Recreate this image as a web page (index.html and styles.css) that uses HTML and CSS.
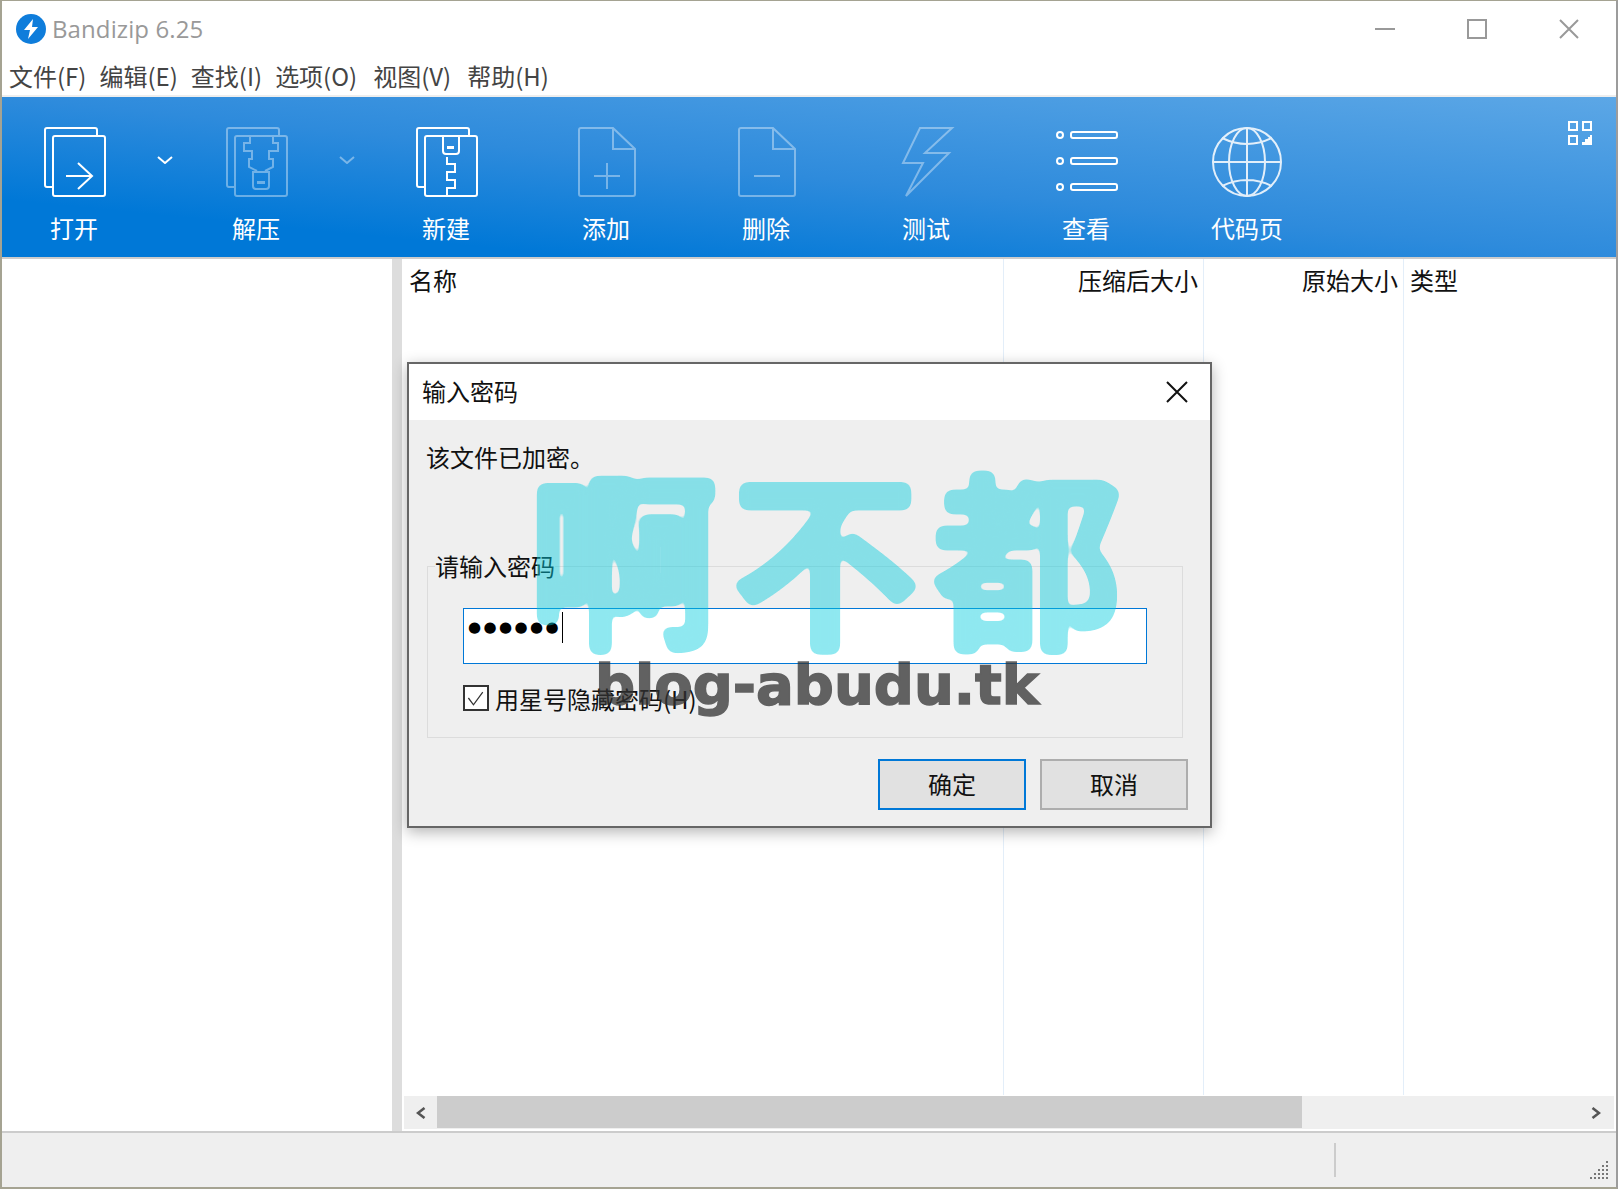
FILE: index.html
```html
<!DOCTYPE html>
<html lang="zh">
<head>
<meta charset="utf-8">
<title>Bandizip 6.25</title>
<link rel="stylesheet" href="styles.css">
</head>
<body>
<svg class="defs" aria-hidden="true">
  <filter id="wm-round" x="-5%" y="-5%" width="110%" height="110%" color-interpolation-filters="sRGB">
    <feGaussianBlur stdDeviation="4"/>
    <feComponentTransfer><feFuncA type="linear" slope="14" intercept="-3.5"/></feComponentTransfer>
  </filter>
</svg>
<div class="window">
  <header class="titlebar">
    <svg class="logo" viewBox="16 14 30 30"><circle cx="31" cy="29" r="15" fill="#0f7ddb"/><path d="M33 19 L24 30 H30 L28 39 L38 27 H32 Z" fill="#fff"/></svg>
    <span class="apptitle">Bandizip 6.25</span>
    <div class="winctl">
      <svg viewBox="0 0 20 20"><path d="M0 10 H20"/></svg>
      <svg viewBox="0 0 20 20"><rect x="1" y="1" width="18" height="18"/></svg>
      <svg viewBox="0 0 20 20"><path d="M1 1 L19 19 M19 1 L1 19"/></svg>
    </div>
  </header>
  <nav class="menubar">
    <span>文件(F)</span><span>编辑(E)</span><span>查找(I)</span><span>选项(O)</span><span class="m-wide">视图(V)</span><span class="m-wide">帮助(H)</span>
  </nav>
  <div class="toolbar">
    <div class="tool tool-short">
      <svg class="ticon" viewBox="38 126 72 72"><path d="M52 187 H47 a2 2 0 0 1 -2 -2 V130 a2 2 0 0 1 2 -2 H95 a2 2 0 0 1 2 2 V136"/><rect x="53" y="136" width="52" height="60" rx="2"/><path d="M66 176 H92 M78 163 L92 176 L78 189"/></svg>
      <span>打开</span>
    </div>
    <div class="chev"><svg viewBox="0 0 16 8"><path d="M1 1 L8 7 L15 1"/></svg></div>
    <div class="tool tool-short dim">
      <svg class="ticon" viewBox="220 126 72 72"><path d="M234 187 H229 a2 2 0 0 1 -2 -2 V130 a2 2 0 0 1 2 -2 H277 a2 2 0 0 1 2 2 V136"/><rect x="235" y="136" width="52" height="60" rx="2"/><path d="M243 136 H250 V143 H244 V151 H252 V159 H249 V167 L257 171 M280 136 H273 V143 H278 V151 H269 V159 H273 V167 L265 171 M253 172 H269 V186 a3 3 0 0 1 -3 3 H256 a3 3 0 0 1 -3 -3 Z"/><rect class="solid" x="257" y="181" width="8" height="3"/></svg>
      <span>解压</span>
    </div>
    <div class="chev dim"><svg viewBox="0 0 16 8"><path d="M1 1 L8 7 L15 1"/></svg></div>
    <div class="tool">
      <svg class="ticon" viewBox="410 126 72 72"><path d="M424 187 H419 a2 2 0 0 1 -2 -2 V130 a2 2 0 0 1 2 -2 H467 a2 2 0 0 1 2 2 V136"/><rect x="425" y="136" width="52" height="60" rx="2"/><path d="M443 136 V151 a3 3 0 0 0 3 3 H456 a3 3 0 0 0 3 -3 V136 M447 157 V164 H455 V172 H447 V180 H455 V188 H447 V196"/><rect class="solid" x="447" y="146" width="7" height="3"/></svg>
      <span>新建</span>
    </div>
    <div class="tool dim">
      <svg class="ticon" viewBox="570 126 72 72"><path d="M613 128 H581 a2 2 0 0 0 -2 2 V194 a2 2 0 0 0 2 2 H633 a2 2 0 0 0 2 -2 V149 Z M613 128 V149 H635 M594 176 H620 M607 163 V189"/></svg>
      <span>添加</span>
    </div>
    <div class="tool dim">
      <svg class="ticon" viewBox="730 126 72 72"><path d="M773 128 H741 a2 2 0 0 0 -2 2 V194 a2 2 0 0 0 2 2 H793 a2 2 0 0 0 2 -2 V149 Z M773 128 V149 H795 M754 176 H780"/></svg>
      <span>删除</span>
    </div>
    <div class="tool dim">
      <svg class="ticon" viewBox="890 126 72 72"><path d="M920 128 H952 L925 153 H949 L906 196 L923 163 H903 Z"/></svg>
      <span>测试</span>
    </div>
    <div class="tool">
      <svg class="ticon" viewBox="1050 126 72 72"><circle cx="1060" cy="135" r="3"/><circle cx="1060" cy="161" r="3"/><circle cx="1060" cy="187" r="3"/><rect x="1071" y="132" width="46" height="6" rx="2"/><rect x="1071" y="158" width="46" height="6" rx="2"/><rect x="1071" y="184" width="46" height="6" rx="2"/></svg>
      <span>查看</span>
    </div>
    <div class="tool tool-code">
      <svg class="ticon globe" viewBox="1211 126 72 72"><circle cx="1247" cy="162" r="34"/><ellipse cx="1247" cy="162" rx="18" ry="34"/><path d="M1247 128 V196 M1213 162 H1281 M1222 138 Q1247 150 1272 138 M1222 186 Q1247 174 1272 186"/></svg>
      <span>代码页</span>
    </div>
    <svg class="gridicon" viewBox="1568 121 24 24"><rect x="1569" y="122" width="8" height="8"/><rect x="1583" y="122" width="8" height="8"/><rect x="1569" y="136" width="8" height="8"/><path class="solid" d="M1592 135 V145 H1582 V142 H1585 V139 H1588 V137 H1590 V135 Z"/></svg>
  </div>
  <main class="main">
    <div class="tree"></div>
    <div class="splitter"></div>
    <section class="list">
      <div class="cols">
        <div class="col col-name">名称</div>
        <div class="col col-num">压缩后大小</div>
        <div class="col col-num">原始大小</div>
        <div class="col col-type">类型</div>
      </div>
      <div class="hscroll">
        <div class="sbtn"><svg viewBox="0 0 10 12"><path d="M8.5 1 L2 6 L8.5 11"/></svg></div>
        <div class="sthumb"></div>
        <div class="sbtn sbtn-end"><svg viewBox="0 0 10 12"><path d="M1.5 1 L8 6 L1.5 11"/></svg></div>
      </div>
    </section>
  </main>
  <footer class="status">
    <div class="statussep"></div>
    <svg class="grip" viewBox="0 0 20 20"><path d="M16 0h2v2h-2z M16 4h2v2h-2z M12 4h2v2h-2z M16 8h2v2h-2z M12 8h2v2h-2z M8 8h2v2h-2z M16 12h2v2h-2z M12 12h2v2h-2z M8 12h2v2h-2z M4 12h2v2h-2z M16 16h2v2h-2z M12 16h2v2h-2z M8 16h2v2h-2z M4 16h2v2h-2z M0 16h2v2h-2z"/></svg>
  </footer>
</div>

<div class="dialog">
  <div class="dlgtitle">
    <span>输入密码</span>
    <svg viewBox="0 0 22 22"><path d="M1 1 L21 21 M21 1 L1 21"/></svg>
  </div>
  <div class="dlgbody">
    <p class="dlgmsg">该文件已加密。</p>
    <div class="group">
      <div class="grouplabel">请输入密码</div>
      <div class="pwd"><span class="dots">●●●●●●</span><span class="caret"></span></div>
      <label class="chk">
        <span class="box"><svg viewBox="0 0 26 26"><path d="M4 13 L10 21 L21 6"/></svg></span>
        <span class="chktext">用星号隐藏密码(H)</span>
      </label>
    </div>
    <div class="btnrow">
      <div class="btn btn-ok">确定</div>
      <div class="btn">取消</div>
    </div>
  </div>
</div>

<div class="wm">
  <div class="wm-cn">啊不都</div>
  <div class="wm-en">blog-abudu.tk</div>
</div>
</body>
</html>
```
FILE: styles.css
```css
* { box-sizing: border-box; }
html, body { margin: 0; padding: 0; }
body {
  width: 1618px;
  height: 1189px;
  position: relative;
  overflow: hidden;
  font-family: "Noto Sans CJK SC", "Noto Sans", sans-serif;
  font-size: 24px;
  line-height: 34px;
  color: #111;
  background: #fff;
}
svg { display: block; fill: none; }
.defs { position: absolute; width: 0; height: 0; }
.window {
  width: 1618px;
  height: 1189px;
  display: flex;
  flex-direction: column;
  border-style: solid;
  border-width: 1px 2px 2px 2px;
  border-color: #a5a392 #9c9c9c #a5a392 #a5a392;
  background: #fff;
}
.titlebar {
  height: 56px;
  flex: none;
  display: flex;
  align-items: center;
  padding: 0 0 0 14px;
}
.logo { width: 30px; height: 30px; }
.apptitle {
  margin-left: 6px;
  font-family: "Open Sans", sans-serif;
  font-size: 24px;
  letter-spacing: .1px;
  color: #999;
}
.winctl {
  margin-left: auto;
  margin-right: 37px;
  display: flex;
  gap: 72px;
}
.winctl svg { width: 20px; height: 20px; stroke: #999; stroke-width: 2; }
.menubar {
  height: 38px;
  flex: none;
  display: flex;
  gap: 13px;
  padding: 2px 0 0 7px;
  color: #444;
}
.m-wide { margin-left: 3px; }
.toolbar {
  height: 162px;
  flex: none;
  display: flex;
  align-items: flex-start;
  padding-top: 29px;
  border-top: 2px solid #eee;
  background: linear-gradient(to top right, #0078d7 0%, #0078d7 18%, #2e8bdc 50%, #5ca7e6 100%);
  color: #fff;
}
.tool {
  width: 160px;
  display: flex;
  flex-direction: column;
  align-items: center;
  gap: 13px;
}
.tool-short { width: 144px; }
.tool-code { margin-left: 1px; }
.ticon { width: 72px; height: 72px; stroke: #fff; stroke-width: 2; }
.solid { fill: #fff; stroke: none; }
.dim .ticon { opacity: .38; }
.globe { opacity: .85; }
.chev { width: 38px; padding: 30px 11px 0; }
.chev svg { width: 16px; height: 8px; stroke: #fff; stroke-width: 2; }
.chev.dim svg { opacity: .4; }
.gridicon {
  width: 24px;
  height: 24px;
  margin-left: auto;
  margin-top: -5px;
  margin-right: 24px;
  stroke: #fff;
  stroke-width: 2;
}
.main {
  flex: 1;
  min-height: 0;
  display: flex;
  border-top: 2px solid #ccc;
}
.tree { width: 390px; flex: none; }
.splitter { width: 10px; flex: none; background: #ddd; }
.list {
  flex: 1;
  min-width: 0;
  display: flex;
  flex-direction: column;
}
.cols { flex: 1; display: flex; min-height: 0; }
.col {
  padding-top: 4px;
  border-right: 1px solid #e3eef9;
  width: 200px;
  color: #111;
}
.col-name { width: 602px; padding-left: 7px; }
.col-num { text-align: right; padding-right: 5px; }
.col-type { flex: 1; border-right: 0; padding-left: 6px; }
.hscroll {
  height: 33px;
  flex: none;
  margin: 1px 2px 2px;
  display: flex;
  background: #efefef;
}
.sbtn { width: 33px; flex: none; display: flex; align-items: center; justify-content: center; }
.sbtn svg { width: 10px; height: 12px; stroke: #555; stroke-width: 2.6; }
.sbtn-end { margin-left: auto; padding-left: 10px; width: 46px; }
.sthumb { width: 865px; height: 32px; background: #ccc; }
.status {
  height: 56px;
  flex: none;
  display: flex;
  align-items: flex-start;
  border-top: 2px solid #ccc;
  background: #efefef;
}
.statussep {
  width: 2px;
  height: 34px;
  margin: 10px 0 0 1332px;
  background: #ccc;
}
.grip { width: 20px; height: 20px; margin: 28px 0 0 254px; fill: #777; }
.dialog {
  position: absolute;
  left: 407px;
  top: 362px;
  width: 805px;
  height: 466px;
  display: flex;
  flex-direction: column;
  border: 2px solid #666;
  background: #efefef;
  box-shadow: 0 4px 14px rgba(0,0,0,.3);
}
.dlgtitle {
  height: 56px;
  flex: none;
  display: flex;
  align-items: center;
  justify-content: space-between;
  padding: 0 22px 0 13px;
  background: #fff;
}
.dlgtitle span { margin-top: -3px; }
.dlgtitle svg { width: 22px; height: 22px; stroke: #111; stroke-width: 2; margin-top: -1px; }
.dlgbody { flex: 1; padding: 20px 22px 16px 18px; display: flex; flex-direction: column; }
.dlgmsg { margin: 0 0 0 -1px; }
.group {
  margin: 92px 5px 0 0;
  height: 172px;
  border: 1px solid #dcdcdc;
  padding: 0 0 0 35px;
}
.grouplabel {
  margin: -18px 0 0 -28px;
  width: max-content;
  background: #efefef;
}
.pwd {
  margin-top: 25px;
  width: 684px;
  height: 56px;
  border: 1.5px solid #0078d7;
  background: #fff;
  display: flex;
  align-items: flex-start;
  padding: 1px 0 0 4px;
}
.dots {
  font-family: "DejaVu Sans", sans-serif;
  font-size: 15px;
  line-height: 34px;
  letter-spacing: 2.4px;
  color: #000;
}
.caret { width: 1px; height: 31px; margin: 2px 0 0 1px; background: #000; }
.chk { display: flex; align-items: center; gap: 6px; margin-top: 20px; height: 27px; }
.chktext { padding-top: 2px; }
.box { width: 26px; height: 26px; border: 2px solid #333; background: #fff; display: block; }
.box svg { width: 22px; height: 22px; stroke: #333; stroke-width: 1.5; }
.btnrow { margin-top: auto; display: flex; justify-content: flex-end; gap: 14px; }
.btn {
  width: 148px;
  height: 51px;
  padding-bottom: 1px;
  display: flex;
  align-items: center;
  justify-content: center;
  border: 2px solid #adadad;
  background: #e1e1e1;
}
.btn-ok { border-color: #0078d7; }
.wm {
  position: absolute;
  left: 500px;
  top: 441px;
  width: 660px;
  pointer-events: none;
}
.wm-cn {
  font-family: "Noto Sans CJK SC", sans-serif;
  font-weight: 700;
  font-size: 192px;
  line-height: 220px;
  letter-spacing: 10px;
  text-align: center;
  color: #03cddf;
  opacity: .44;
  filter: url(#wm-round);
  white-space: nowrap;
}
.wm-en {
  margin-top: -11px;
  padding-right: 26px;
  font-family: "DejaVu Sans", sans-serif;
  font-weight: 700;
  font-size: 56px;
  line-height: 70px;
  text-align: center;
  color: #323232;
  opacity: .75;
  -webkit-text-stroke: 1.5px #323232;
  white-space: nowrap;
}
```
